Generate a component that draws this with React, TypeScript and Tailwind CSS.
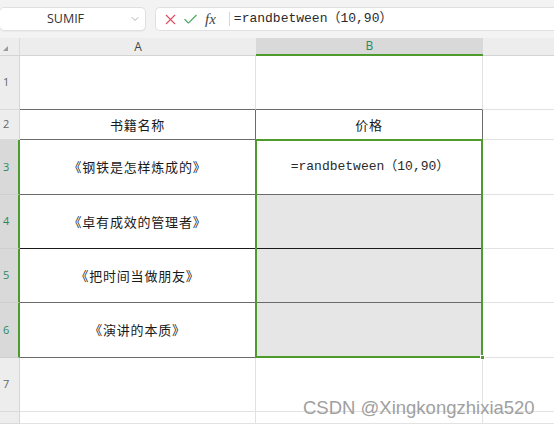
import { Check, ChevronDown, X } from "lucide-react";

// grid row (1 = column header row) for each sheet row
const rowStart: Record<number, string> = {
  1: "row-start-2",
  2: "row-start-3",
  3: "row-start-4",
  4: "row-start-5",
  5: "row-start-6",
  6: "row-start-7",
  7: "row-start-8",
  8: "row-start-9",
};

const books: Record<number, string> = {
  2: "书籍名称",
  3: "《钢铁是怎样炼成的》",
  4: "《卓有成效的管理者》",
  5: "《把时间当做朋友》",
  6: "《演讲的本质》",
};

const cjk = "font-['Microsoft_YaHei','Noto_Sans_CJK_SC',sans-serif] tracking-[0.8px]";
const mono = "font-['SimSun','Liberation_Mono','Noto_Sans_CJK_SC',monospace]";

function RowHeader({ n }: { n: number }) {
  const selected = n >= 3 && n <= 6;
  return (
    <div
      className={
        `col-start-1 ${rowStart[n]} flex items-center pl-[3px] text-[11px] font-['Open_Sans',sans-serif] border-b ` +
        (selected
          ? "bg-[#d9d9d9] text-[#2b8a5d] border-b-[#cfcfcf] border-r-2 border-r-[#4f9a2c]"
          : "bg-[#ededed] text-[#666] border-b-[#dadada] border-r border-r-[#d6d6d6]")
      }
    >
      {n < 8 ? n : ""}
    </div>
  );
}

function bottomBorder(n: number) {
  if (n === 4) return "border-b-[#1a1a1a]";
  if (n >= 1 && n <= 6) return "border-b-[#6b6b6b]";
  return "border-b-[#e2e2e2]";
}

function CellA({ n }: { n: number }) {
  const inTable = n >= 2 && n <= 6;
  return (
    <div
      className={
        `col-start-2 ${rowStart[n]} flex items-center justify-center text-[13px] text-[#1a1a1a] ${cjk} border-b border-r ${bottomBorder(n)} ` +
        (inTable ? "border-r-[#6b6b6b]" : "border-r-[#e2e2e2]")
      }
    >
      {books[n] ?? ""}
    </div>
  );
}

function CellB({ n }: { n: number }) {
  const inTable = n >= 2 && n <= 6;
  const fill = n >= 4 && n <= 6 ? "bg-[#e6e6e6]" : "bg-white";
  return (
    <div
      className={
        `col-start-3 ${rowStart[n]} flex items-center justify-center text-[13px] text-[#1a1a1a] border-b border-r ${bottomBorder(n)} ${fill} ` +
        (inTable ? "border-r-[#6b6b6b]" : "border-r-[#e2e2e2]")
      }
    >
      {n === 2 && <span className={cjk}>价格</span>}
      {n === 3 && (
        <span className={`${mono} pl-[2px] whitespace-nowrap text-[#2a2a2a]`}>=randbetween（10,90）</span>
      )}
    </div>
  );
}

export default function App() {
  const sheetRows = [1, 2, 3, 4, 5, 6, 7, 8];
  return (
    <div className="w-[554px] h-[424px] overflow-hidden bg-white flex flex-col relative select-none">
      {/* Name box + formula bar */}
      <div className="h-[38px] bg-[#f3f3f3] flex items-start pt-[7px] gap-[9px] shrink-0">
        <div className="w-[147px] h-[24px] -ml-px bg-white border border-[#e0e0e0] rounded-[5px] flex items-center shadow-[0_1px_1px_rgba(0,0,0,0.04)]">
          <span className="flex-1 text-center text-[12.5px] text-[#333] font-['Open_Sans',sans-serif] pl-[2px]">
            SUMIF
          </span>
          <ChevronDown className="w-[12px] h-[12px] text-[#999] mr-[4px]" strokeWidth={1.5} />
        </div>
        <div className="flex-1 h-[24px] bg-white border border-[#e0e0e0] border-r-0 rounded-l-[5px] flex items-center">
          <X className="w-[17px] h-[17px] text-[#e04a5f] ml-[6px]" strokeWidth={1.5} />
          <Check className="w-[17px] h-[17px] text-[#3fa45b] ml-[3px]" strokeWidth={1.5} />
          <span className="ml-[6px] text-[15px] italic text-[#444] font-['Liberation_Serif',serif]">fx</span>
          <span className="ml-[13px] w-px h-[14px] bg-[#d6d6d6]" />
          <span className={`ml-[4px] text-[13px] text-[#2a2a2a] ${mono} whitespace-nowrap`}>=randbetween（10,90）</span>
        </div>
      </div>

      {/* Sheet grid */}
      <div className="flex-1 grid grid-cols-[20px_236px_227px_1fr] grid-rows-[18px_54px_30px_55px_54px_54px_55px_54px_1fr]">
        {/* Column headers */}
        <div className="col-start-1 row-start-1 bg-[#ededed] border-b border-[#d4d4d4] border-r border-r-[#dadada] flex items-end pl-[3px] pb-[4px]">
          <svg width="5" height="5" viewBox="0 0 5 5">
            <polygon points="5,0 5,5 0,5" fill="#9a9a9a" />
          </svg>
        </div>
        <div className="col-start-2 row-start-1 bg-[#ededed] border-b border-[#d4d4d4] flex items-center justify-center text-[12px] text-[#444] font-['Open_Sans',sans-serif]">
          A
        </div>
        <div className="col-start-3 row-start-1 bg-[#d9d9d9] border-b-2 border-[#4f9a2c] flex items-center justify-center text-[12px] text-[#2b8a5d] font-['Open_Sans',sans-serif]">
          B
        </div>
        <div className="col-start-4 row-start-1 bg-[#ededed] border-b border-[#d4d4d4]" />

        {sheetRows.map((n) => (
          <div key={n} className="contents">
            <RowHeader n={n} />
            <CellA n={n} />
            <CellB n={n} />
            <div className={`col-start-4 ${rowStart[n]} border-b border-[#e2e2e2]`} />
          </div>
        ))}

        {/* Selection B3:B6 */}
        <div className="col-start-3 row-start-4 row-end-8 -ml-px -mt-px border-2 border-[#4f9a2c] pointer-events-none relative">
          <div className="absolute -right-[4px] -bottom-[4px] w-[5px] h-[5px] bg-[#4f9a2c] border border-white" />
        </div>
      </div>

      {/* Watermark */}
      <div className="absolute left-[303px] top-[394px] text-[18.5px] text-[#a0a0a0] font-['Liberation_Sans',sans-serif]">
        CSDN @Xingkongzhixia520
      </div>
    </div>
  );
}
